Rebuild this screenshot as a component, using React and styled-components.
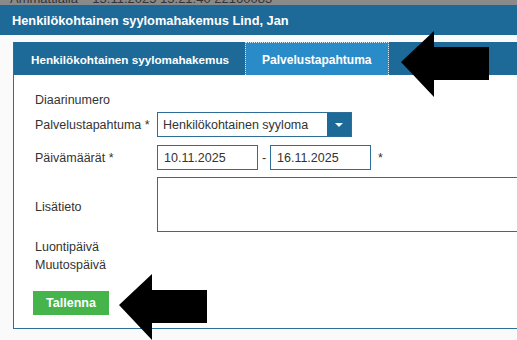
import React from "react";
import styled, { createGlobalStyle } from "styled-components";

const GlobalStyle = createGlobalStyle`
  body {
    margin: 0;
    background: #fafafa;
    font-family: "Liberation Sans", Arial, sans-serif;
    overflow: hidden;
  }
`;

const Page = styled.div`
  position: relative;
  width: 517px;
  height: 340px;
  overflow: hidden;
  background: #fafafa;
`;

const TopStrip = styled.div`
  height: 5px;
  overflow: hidden;
  background: #8a8a8a;
  color: #333;
  font-size: 13px;
  line-height: 13px;
  white-space: nowrap;
  padding-left: 10px;
  & > span {
    display: block;
    margin-top: -8px;
  }
`;

const TitleBar = styled.div`
  height: 30px;
  display: flex;
  align-items: center;
  padding: 1px 0 0 12px;
  box-sizing: border-box;
  background: #1d6a99;
  color: #fff;
  font-size: 12.8px;
  font-weight: bold;
`;

const Panel = styled.div`
  margin: 7px 0 0 13px;
  width: 520px;
  border-left: 1px solid #2e6f99;
  border-bottom: 1px solid #2e6f99;
  background: #fff;
`;

const TabBar = styled.div`
  height: 33px;
  display: flex;
  align-items: stretch;
  background: #1d6a99;
`;

const Tab = styled.div`
  display: flex;
  align-items: center;
  padding: 1px ${(p) => (p.$active ? "17px" : "15px")} 0
    ${(p) => (p.$active ? "16px" : "16px")};
  color: #fff;
  font-size: ${(p) => (p.$active ? "12px" : "11.7px")};
  font-weight: bold;
  background: ${(p) => (p.$active ? "#2a8bc9" : "transparent")};
  border: 1px dotted ${(p) => (p.$active ? "#d8ecf8" : "transparent")};
  border-bottom: none;
`;

const Form = styled.div`
  padding: 15px 0 13px 21px;
  display: flex;
  flex-direction: column;
`;

const Row = styled.div`
  display: flex;
  align-items: center;
  min-height: ${(p) => p.$h || 18}px;
  margin-top: ${(p) => p.$mt || 0}px;
  color: #333;
  font-size: 12.5px;
`;

const Label = styled.div`
  width: 122px;
  flex: none;
  padding-top: ${(p) => p.$pt || 0}px;
`;

const Select = styled.div`
  width: 193px;
  height: 23px;
  border: 1px solid #2e6f99;
  display: flex;
  align-items: center;
  background: #fff;
`;

const SelectText = styled.span`
  flex: 1;
  padding-left: 5px;
`;

const SelectButton = styled.div`
  width: 24px;
  height: 100%;
  background: #1d6a99;
  display: flex;
  align-items: center;
  justify-content: center;
`;

const Caret = styled.div`
  width: 0;
  height: 0;
  border-left: 4px solid transparent;
  border-right: 4px solid transparent;
  border-top: 4px solid #fff;
`;

const DateInput = styled.div`
  width: 93px;
  height: 23px;
  border: 1px solid #2e6f99;
  display: flex;
  align-items: center;
  padding-left: 6px;
`;

const Dash = styled.span`
  width: 12px;
  text-align: center;
`;

const Star = styled.span`
  margin-left: 7px;
`;

const TextArea = styled.div`
  width: 400px;
  height: 53px;
  border: 1px solid #2e6f99;
`;

const SaveButton = styled.button`
  margin: 17px 0 0 -2px;
  width: 76px;
  height: 24px;
  border: none;
  background: #45b44b;
  color: #fff;
  font-family: "Liberation Sans", Arial, sans-serif;
  font-size: 12.5px;
  font-weight: bold;
  padding: 0;
`;

const Arrow = styled.svg`
  position: absolute;
  left: ${(p) => p.$x}px;
  top: ${(p) => p.$y}px;
`;

const BigArrow = ({ x, y }) => (
  <Arrow $x={x} $y={y} width="90" height="68" viewBox="0 0 90 68">
    <polygon points="0,31 33,0 33,16 88,16 88,49 33,49 33,66" fill="#000" />
  </Arrow>
);

export default function App() {
  return (
    <Page>
      <GlobalStyle />
      <TopStrip>
        <span>Ammattialla &nbsp;&nbsp; 13.11.2025 15:21:40 22160083</span>
      </TopStrip>
      <TitleBar>Henkilökohtainen syylomahakemus Lind, Jan</TitleBar>
      <Panel>
        <TabBar>
          <Tab>Henkilökohtainen syylomahakemus</Tab>
          <Tab $active>Palvelustapahtuma</Tab>
        </TabBar>
        <Form>
          <Row $h={20}>
            <Label>Diaarinumero</Label>
          </Row>
          <Row $mt={2} $h={25}>
            <Label>Palvelustapahtuma *</Label>
            <Select>
              <SelectText>Henkilökohtainen syyloma</SelectText>
              <SelectButton>
                <Caret />
              </SelectButton>
            </Select>
          </Row>
          <Row $mt={8} $h={25}>
            <Label>Päivämäärät *</Label>
            <DateInput>10.11.2025</DateInput>
            <Dash>-</Dash>
            <DateInput>16.11.2025</DateInput>
            <Star>*</Star>
          </Row>
          <Row $mt={7} $h={55}>
            <Label $pt={5}>Lisätieto</Label>
            <TextArea />
          </Row>
          <Row $mt={6}>
            <Label>Luontipäivä</Label>
          </Row>
          <Row>
            <Label>Muutospäivä</Label>
          </Row>
          <div>
            <SaveButton>Tallenna</SaveButton>
          </div>
        </Form>
      </Panel>
      <BigArrow x={401} y={31} />
      <BigArrow x={119} y={274} />
    </Page>
  );
}
